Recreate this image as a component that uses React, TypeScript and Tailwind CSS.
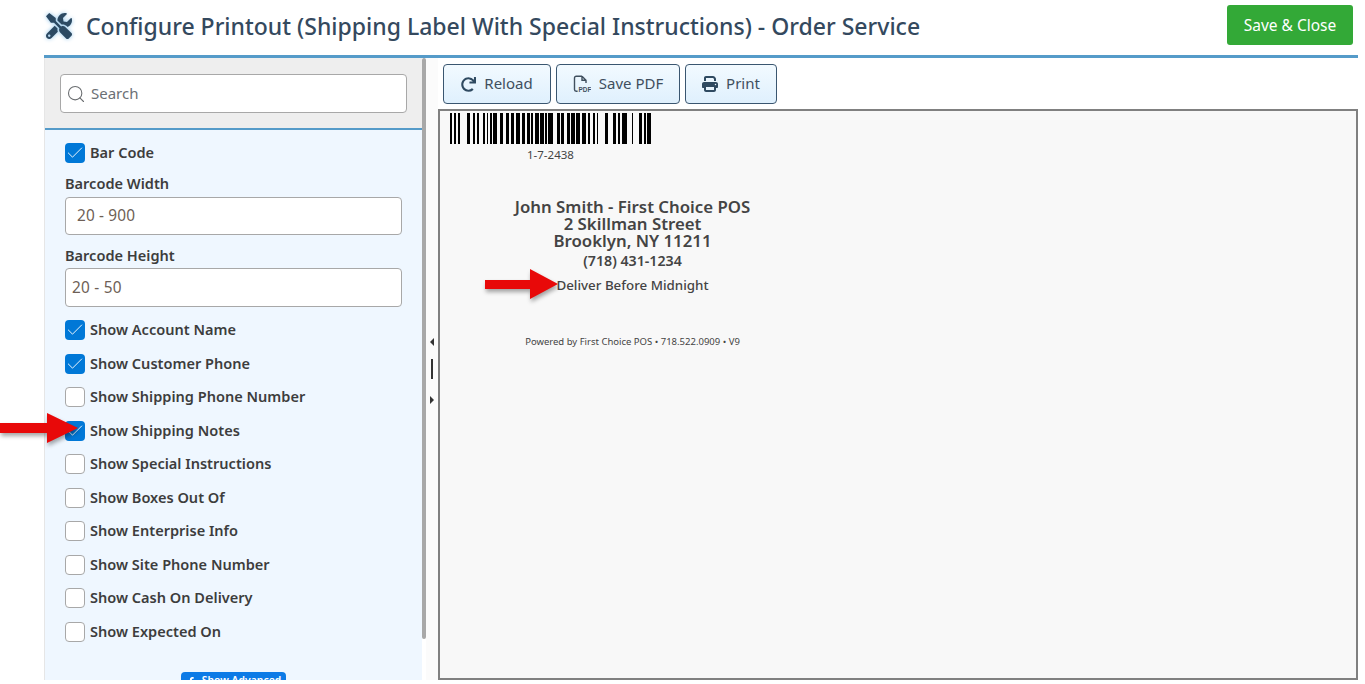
import { FaTools, FaRedo, FaFacebookF } from "react-icons/fa";
import { FaPrint } from "react-icons/fa6";
import { Search, Check } from "lucide-react";

const bars: [number, number][] = [
  [450, 2], [454, 2], [458, 2], [467, 3], [473, 2], [477, 2], [483, 2], [487, 1], [490, 2], [493, 4], [500, 3], [506, 3], [511, 3], [516, 4], [522, 3], [527, 3],
  [531, 2], [535, 4], [540, 4], [545, 2], [548, 5], [557, 3], [561, 3], [567, 3], [571, 4], [576, 4], [582, 4], [588, 2], [593, 2], [597, 1], [605, 3],
  [613, 3], [618, 2], [622, 5], [632, 1], [639, 3], [644, 2], [647, 4],
];

const toggles: [string, boolean][] = [
  ["Show Account Name", true],
  ["Show Customer Phone", true],
  ["Show Shipping Phone Number", false],
  ["Show Shipping Notes", true],
  ["Show Special Instructions", false],
  ["Show Boxes Out Of", false],
  ["Show Enterprise Info", false],
  ["Show Site Phone Number", false],
  ["Show Cash On Delivery", false],
  ["Show Expected On", false],
];

function Box({ on }: { on: boolean }) {
  return on ? (
    <span className="flex h-[20px] w-[20px] shrink-0 items-center justify-center rounded-[4px] bg-[#0078d7]">
      <Check size={20} strokeWidth={1.1} color="#ffffff" />
    </span>
  ) : (
    <span className="h-[20px] w-[20px] shrink-0 rounded-[4px] border border-[#a8a8a8] bg-white" />
  );
}

function Row({ label, on }: { label: string; on: boolean }) {
  return (
    <div className="flex h-[33.5px] items-center gap-[5px] text-[14.55px] font-semibold text-[#3d3d3d]">
      <Box on={on} />
      <span>{label}</span>
    </div>
  );
}

function Tool({ children, w }: { children: React.ReactNode; w: string }) {
  return (
    <button className={`flex h-[40px] items-center justify-center gap-[8px] rounded-[4px] border border-[#3a5670] bg-gradient-to-b from-[#f2faff] to-[#dff0fd] text-[15px] text-[#3f4f5e] ${w}`}>
      {children}
    </button>
  );
}

function Arrow({ className, d }: { className: string; d: string }) {
  return (
    <svg className={className} width="80" height="40" viewBox="0 0 80 40" style={{ filter: "drop-shadow(1px 3px 2px rgba(0,0,0,0.35))" }}>
      <path d={d} fill="#e80909" />
    </svg>
  );
}

function PdfIcon() {
  return (
    <svg width="18" height="18" viewBox="0 0 18 18" fill="none">
      <path d="M9 1.2H3.2A1.7 1.7 0 0 0 1.5 2.9V14.6A1.7 1.7 0 0 0 3.2 16.3H4.6M9 1.2L13 5.2V8M9 1.2V5.2H13" stroke="#3f4f5e" strokeWidth="1.4" />
      <text x="5.6" y="16.8" fontSize="6.4" fontWeight="700" fill="#3f4f5e" fontFamily="Liberation Sans, sans-serif">PDF</text>
    </svg>
  );
}

export default function App() {
  return (
    <div className="relative h-[684px] w-[1365px] overflow-hidden bg-white pl-[44px] pr-[7px] font-['Noto_Sans','Open_Sans',sans-serif]">
      <header className="flex h-[55px] items-start">
        <div className="flex h-[52px] flex-1 items-center">
          <FaTools size={26} color="#2c4a63" className="ml-[2px] mt-[-1px] drop-shadow-[0_0_2px_#8fc4ea]" />
          <h1 className="ml-[14px] text-[23px] font-medium text-[#34495e]">
            Configure Printout (Shipping Label With Special Instructions) - Order Service
          </h1>
        </div>
        <button className="mr-[5px] mt-[5px] h-[40px] w-[126px] rounded-[3px] bg-[#33a937] pt-[1px] text-[15.5px] text-white">
          Save &amp; Close
        </button>
      </header>

      <main className="flex h-[625px] border-t-[3px] border-[#559bc9]">
        <aside className="flex h-full w-[378px] shrink-0 flex-col overflow-hidden border-l border-[#e6e6e6] bg-[#eff7ff]">
          <div className="h-[72px] shrink-0 border-b-2 border-[#559bc9] bg-[#eeeeee] pl-[15px] pt-[16px]">
            <div className="flex h-[39px] w-[347px] items-center rounded-[4px] border border-[#a8a8a8] bg-white pl-[5px] text-[15px] text-[#6b7075]">
              <Search size={20} strokeWidth={1.3} color="#6a6d70" />
              <span className="ml-[5px]">Search</span>
            </div>
          </div>
          <div className="pl-[20px] pt-[13px]">
            <div className="flex h-[20px] items-center gap-[5px] text-[14.55px] font-semibold text-[#3d3d3d]">
              <Box on={true} />
              <span>Bar Code</span>
            </div>
            <div className="mt-[10px] h-[20px] text-[14.55px] leading-[20px] font-semibold text-[#3d3d3d]">Barcode Width</div>
            <div className="mt-[4px] flex h-[38px] w-[337px] items-center rounded-[4px] border border-[#a8a8a8] bg-white pl-[11px] text-[15.4px] tracking-[0.15px] text-[#6e5f56]">
              20 - 900
            </div>
            <div className="mt-[10px] h-[20px] text-[14.55px] leading-[20px] font-semibold text-[#3d3d3d]">Barcode Height</div>
            <div className="mt-[3px] flex h-[39px] w-[337px] items-center rounded-[4px] border border-[#a8a8a8] bg-white pl-[6px] text-[15.4px] tracking-[0.25px] text-[#6e5f56]">
              20 - 50
            </div>
            <div className="mt-[6.5px]">
              {toggles.map(([l, on]) => (
                <Row key={l} label={l} on={on} />
              ))}
            </div>
            <div className="ml-[116px] mt-[23.5px] flex h-[24px] w-[105px] items-start justify-center gap-[6px] rounded-[4px] bg-[#0d7be6] pt-[1px] text-[10.4px] font-semibold text-white">
              <FaFacebookF size={10} className="mt-[4px]" />
              <span>Show Advanced</span>
            </div>
          </div>
        </aside>

        <div className="w-[4px] shrink-0">
          <div className="h-[581px] rounded-[2px] bg-[#a8a8a8]" />
        </div>

        <div className="flex w-[12px] shrink-0 flex-col items-center bg-[#fbfbfb] pr-[1px] pt-[280px]">
          <span className="h-0 w-0 border-y-[4px] border-r-[4px] border-y-transparent border-r-[#333333]" />
          <span className="mt-[13px] h-[20px] w-[2px] bg-[#333333]" />
          <span className="mt-[17px] h-0 w-0 border-y-[4px] border-l-[4px] border-y-transparent border-l-[#333333]" />
        </div>

        <section className="flex min-w-0 flex-1 flex-col">
          <div className="flex h-[51px] shrink-0 gap-[5px] pl-[5px] pt-[6px]">
            <Tool w="w-[108px]">
              <FaRedo size={15} color="#2f4a61" />
              <span className="mb-[2px]">Reload</span>
            </Tool>
            <Tool w="w-[124px]">
              <PdfIcon />
              <span className="mb-[2px]">Save PDF</span>
            </Tool>
            <Tool w="w-[92px]">
              <FaPrint size={16} color="#2f4a61" />
              <span className="mb-[2px]">Print</span>
            </Tool>
          </div>
          <div className="min-h-0 flex-1 border-2 border-[#808080] bg-[#f8f8f8] text-[#444444]">
            <svg width="210" height="32" viewBox="449 0 210 32" className="ml-[9px] mt-[2px] block">
              {bars.map(([x, w]) => (
                <rect key={x} x={x} y="0" width={w} height="31" fill="#000000" />
              ))}
            </svg>
            <div className="ml-[87px] mt-[2px] text-[11.5px] leading-[16px]">1-7-2438</div>
            <div className="ml-[18px] mt-[35px] w-[349px] text-center">
              <div className="text-[16.8px] leading-[17px] font-semibold">
                John Smith - First Choice POS
                <br />
                2 Skillman Street
                <br />
                Brooklyn, NY 11211
              </div>
              <div className="mt-[2px] text-[14.2px] leading-[20px] font-semibold">(718) 431-1234</div>
              <div className="mt-[4px] text-[13.35px] leading-[20px] font-medium">Deliver Before Midnight</div>
              <div className="mt-[39px] text-[9.5px] leading-[16px]">Powered by First Choice POS • 718.522.0909 • V9</div>
            </div>
          </div>
        </section>
      </main>

      <Arrow className="absolute left-0 top-[413px]" d="M0 10 H47 V0 L78 15 L47 30 V20 H0 Z" />
      <Arrow className="absolute left-[485px] top-[269px]" d="M0 11 H45 V0 L73 15 L45 30 V20 H0 Z" />
    </div>
  );
}
